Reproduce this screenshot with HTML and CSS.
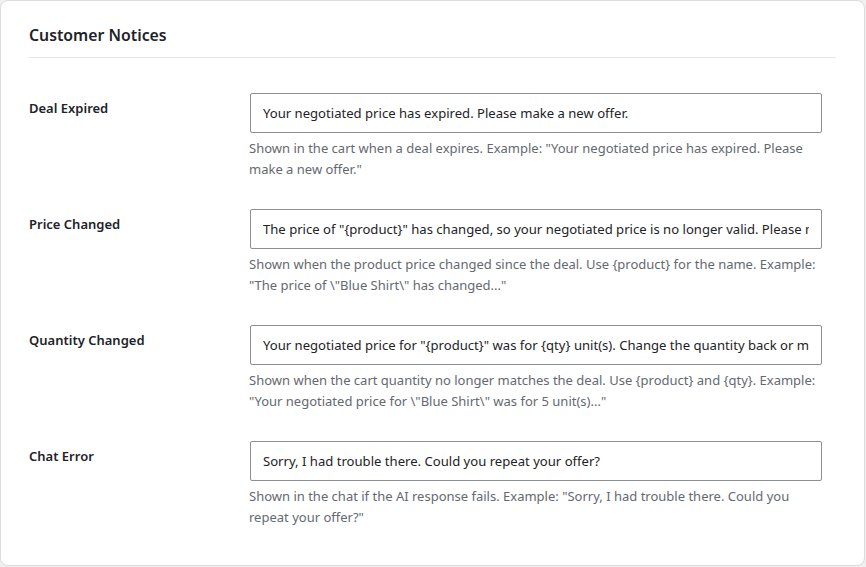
FILE: index.html
```html
<!DOCTYPE html>
<html lang="en">
<head>
    <meta charset="UTF-8">
    <meta name="viewport" content="width=device-width, initial-scale=1.0">
    <title>Customer Notices</title>
    <link rel="stylesheet" href="styles.css">
</head>
<body>
    <div class="card">
        <h2 class="card-title">Customer Notices</h2>
        <div class="rows">
            <div class="row">
                <label class="row-label" for="deal-expired">Deal Expired</label>
                <div class="row-field">
                    <input id="deal-expired" type="text" value="Your negotiated price has expired. Please make a new offer.">
                    <p class="desc">Shown in the cart when a deal expires. Example: "Your negotiated price has expired. Please make a new offer."</p>
                </div>
            </div>
            <div class="row">
                <label class="row-label" for="price-changed">Price Changed</label>
                <div class="row-field">
                    <input id="price-changed" type="text" value='The price of "{product}" has changed, so your negotiated price is no longer valid. Please make a new offer.'>
                    <p class="desc">Shown when the product price changed since the deal. Use {product} for the name. Example: "The price of \"Blue Shirt\" has changed..."</p>
                </div>
            </div>
            <div class="row">
                <label class="row-label" for="qty-changed">Quantity Changed</label>
                <div class="row-field">
                    <input id="qty-changed" type="text" value='Your negotiated price for "{product}" was for {qty} unit(s). Change the quantity back or make a new offer.'>
                    <p class="desc">Shown when the cart quantity no longer matches the deal. Use {product} and {qty}. Example: "Your negotiated price for \"Blue Shirt\" was for 5 unit(s)..."</p>
                </div>
            </div>
            <div class="row">
                <label class="row-label" for="chat-error">Chat Error</label>
                <div class="row-field">
                    <input id="chat-error" type="text" value="Sorry, I had trouble there. Could you repeat your offer?">
                    <p class="desc">Shown in the chat if the AI response fails. Example: "Sorry, I had trouble there. Could you repeat your offer?"</p>
                </div>
            </div>
        </div>
    </div>
</body>
</html>
```

FILE: styles.css
```css
* {
    box-sizing: border-box;
    margin: 0;
    padding: 0;
    font-family: 'Noto Sans', sans-serif;
}
body {
    background: #f0f0f1;
    color: #1d2327;
}
.card {
    width: 865px;
    height: 566px;
    background: #fff;
    border: 1px solid #dcdcde;
    border-radius: 8px;
    padding: 0 28px;
}
.card-title {
    font-size: 15.8px;
    font-weight: 600;
    line-height: 22px;
    padding: 23px 0 11px;
    border-bottom: 1px solid #e6e7e9;
}
.rows {
    padding-top: 20px;
}
.row {
    display: grid;
    grid-template-columns: 221px 572px;
    padding: 15px 0 14px;
}
.row-label {
    font-size: 13px;
    font-weight: 600;
    line-height: 20px;
    padding-top: 5px;
}
.row-field input {
    display: block;
    width: 572px;
    height: 40px;
    padding: 0 12px;
    border: 1px solid #8c8f94;
    border-radius: 2px;
    font-size: 13.1px;
    color: #1d2327;
    background: #fff;
    outline: none;
}
.desc {
    margin-top: 5px;
    margin-left: -1px;
    font-size: 13px;
    line-height: 21px;
    color: #646970;
}
```
